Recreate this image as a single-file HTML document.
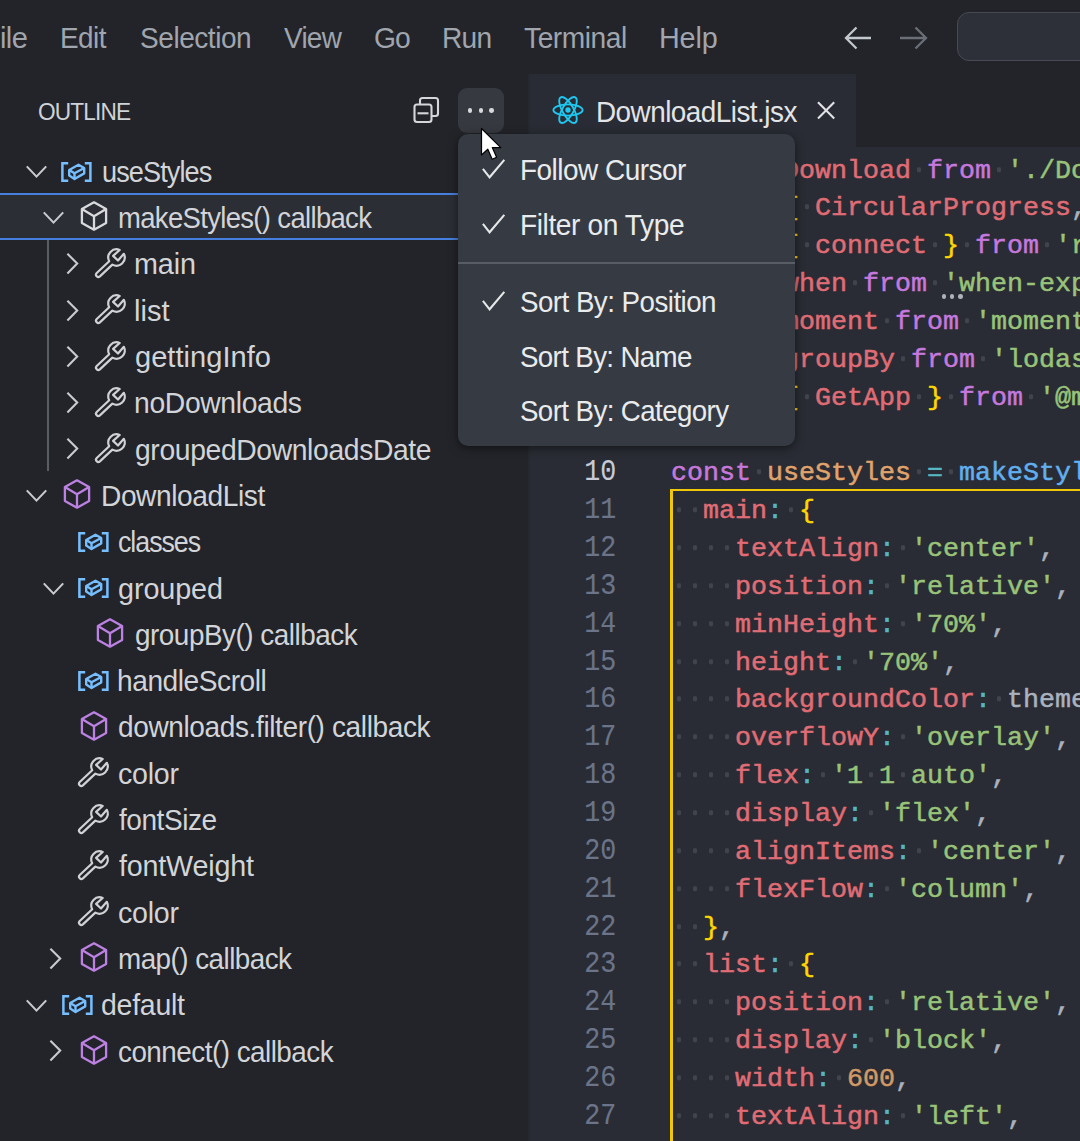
<!DOCTYPE html>
<html><head><meta charset="utf-8"><style>
html,body{margin:0;padding:0;width:1080px;height:1141px;overflow:hidden;background:#222429;}
.r{position:absolute;}
.t{position:absolute;white-space:nowrap;line-height:normal;}
i{display:inline-block;width:16.0px;height:1px;position:relative;}
i::after{content:"";position:absolute;left:5.9px;top:-9.6px;width:4.4px;height:4.4px;border-radius:1.2px;background:#3f444d;}
</style></head><body>
<div class="r" style="left:0px;top:0px;width:1080px;height:74px;background:#222429;"></div>
<div class="r" style="left:0px;top:74px;width:529px;height:1067px;background:#222429;"></div>
<div class="r" style="left:528px;top:74px;width:2px;height:1067px;background:#26292e;"></div>
<div class="r" style="left:530px;top:74px;width:550px;height:73px;background:#222429;"></div>
<div class="r" style="left:530px;top:74px;width:326px;height:73px;background:#292c34;"></div>
<div class="r" style="left:530px;top:147px;width:550px;height:994px;background:#292c34;"></div>
<div class="t" style="left:0px;top:22.17px;font-size:29px;color:#a0a5ae;font-family:'Liberation Sans', sans-serif;letter-spacing:-0.6px">ile</div>
<div class="t" style="left:59.84px;top:22.17px;font-size:29px;letter-spacing:-0.583px;color:#a0a5ae;font-family:'Liberation Sans', sans-serif;transform:scaleX(0.9617);transform-origin:0 0;">Edit</div>
<div class="t" style="left:139.54px;top:22.17px;font-size:29px;letter-spacing:-0.469px;color:#a0a5ae;font-family:'Liberation Sans', sans-serif;transform:scaleX(0.9667);transform-origin:0 0;">Selection</div>
<div class="t" style="left:283.76px;top:22.17px;font-size:29px;letter-spacing:-0.750px;color:#a0a5ae;font-family:'Liberation Sans', sans-serif;transform:scaleX(0.9623);transform-origin:0 0;">View</div>
<div class="t" style="left:374.14px;top:22.17px;font-size:29px;letter-spacing:-0.950px;color:#a0a5ae;font-family:'Liberation Sans', sans-serif;transform:scaleX(0.9743);transform-origin:0 0;">Go</div>
<div class="t" style="left:442.42px;top:22.17px;font-size:29px;letter-spacing:-0.750px;color:#a0a5ae;font-family:'Liberation Sans', sans-serif;transform:scaleX(0.9684);transform-origin:0 0;">Run</div>
<div class="t" style="left:524.21px;top:22.17px;font-size:29px;letter-spacing:-0.454px;color:#a0a5ae;font-family:'Liberation Sans', sans-serif;transform:scaleX(0.9702);transform-origin:0 0;">Terminal</div>
<div class="t" style="left:658.77px;top:22.17px;font-size:29px;letter-spacing:-0.158px;color:#a0a5ae;font-family:'Liberation Sans', sans-serif;transform:scaleX(0.9919);transform-origin:0 0;">Help</div>
<svg class="r" style="left:840px;top:20px" width="100" height="40" viewBox="0 0 100 40">
<path d="M6 18 L31 18 M16.5 7.5 L6 18 L16.5 28.5" stroke="#c3c7ce" stroke-width="2.3" fill="none"/>
<path d="M60 18 L86 18 M75.5 7.5 L86 18 L75.5 28.5" stroke="#6a6e76" stroke-width="2.3" fill="none"/>
</svg>
<div class="r" style="left:957px;top:11.5px;width:200px;height:49.3px;box-sizing:border-box;border:1.8px solid #474a52;border-radius:12px;background:#2d3038"></div>
<div class="t" style="left:37.96px;top:98.44px;font-size:24px;letter-spacing:-0.908px;color:#cfd2d6;font-family:'Liberation Sans', sans-serif;transform:scaleX(0.9440);transform-origin:0 0;">OUTLINE</div>
<svg class="r" style="left:410px;top:94px" width="32" height="32" viewBox="0 0 32 32">
<g stroke="#d4d6da" stroke-width="2.1" fill="none">
<path d="M10 10 V6.5 a2.5 2.5 0 0 1 2.5 -2.5 h13 a2.5 2.5 0 0 1 2.5 2.5 v13 a2.5 2.5 0 0 1 -2.5 2.5 h-4"/>
<rect x="4.5" y="10.5" width="17" height="17.5" rx="2.5"/>
<path d="M7.5 19.3 H18.5"/></g>
</svg>
<div class="r" style="left:458px;top:87.5px;width:46px;height:45.5px;border-radius:9px;background:#36393f"></div>
<div class="r" style="left:468.05px;top:108.35px;width:4.3px;height:4.3px;border-radius:50%;background:#d6d8dc"></div>
<div class="r" style="left:478.65000000000003px;top:108.35px;width:4.3px;height:4.3px;border-radius:50%;background:#d6d8dc"></div>
<div class="r" style="left:489.25px;top:108.35px;width:4.3px;height:4.3px;border-radius:50%;background:#d6d8dc"></div>
<div class="r" style="left:0px;top:193px;width:458px;height:47px;background:#2b2e35;box-sizing:border-box;border-top:2.2px solid #4580e0;border-bottom:2.2px solid #4580e0"></div>
<div class="r" style="left:47.2px;top:240px;width:1.6px;height:231px;background:#5a5d63;"></div>
<svg class="r" style="left:25.2px;top:164.15px" width="24" height="16" viewBox="0 0 24 16"><path d="M1.8 2.4 L11.5 12.6 L21.2 2.4" stroke="#c9cbd0" stroke-width="2.1" fill="none"/></svg>
<svg class="r" style="left:61px;top:160.65px" width="32" height="22" viewBox="0 0 32 22">
<g stroke="#75beff" fill="none" stroke-width="2.5">
<path d="M7.2 2.3 H1.4 V19.7 H7.2"/>
<path d="M23.8 2.3 H29.4 V19.7 H23.8"/>
</g>
<g stroke="#75beff" fill="none" stroke-width="2.4" stroke-linejoin="round">
<path d="M8.2 9 L17.5 3.8 L23.2 7 V12.4 L13.5 18 L8.2 14.6 Z"/>
<path d="M8.2 9 L13.5 12.2 L23.2 7 M13.5 12.2 V18"/>
</g>
</svg>
<div class="t" style="left:101.66px;top:155.81px;font-size:29px;letter-spacing:-0.956px;color:#d2d4d8;font-family:'Liberation Sans', sans-serif;transform:scaleX(0.9345);transform-origin:0 0;">useStyles</div>
<svg class="r" style="left:41.9px;top:210.45000000000002px" width="24" height="16" viewBox="0 0 24 16"><path d="M1.8 2.4 L11.5 12.6 L21.2 2.4" stroke="#c9cbd0" stroke-width="2.1" fill="none"/></svg>
<svg class="r" style="left:79.6px;top:200.35px" width="30" height="32" viewBox="0 0 30 32">
<g stroke="#d8dadd" stroke-width="2.3" fill="none" stroke-linejoin="round">
<path d="M14 2.3 L26.1 9.1 V22.9 L14 29.7 L1.9 22.9 V9.1 Z"/>
<path d="M1.9 9.1 L14 16.3 L26.1 9.1 M14 16.3 V29.7"/>
</g></svg>
<div class="t" style="left:118.11px;top:202.12px;font-size:29px;letter-spacing:-0.700px;color:#d2d4d8;font-family:'Liberation Sans', sans-serif;transform:scaleX(0.9474);transform-origin:0 0;">makeStyles() callback</div>
<svg class="r" style="left:64.8px;top:252.25px" width="16" height="24" viewBox="0 0 16 24"><path d="M2.4 1.8 L12.2 11.6 L2.4 21.4" stroke="#c9cbd0" stroke-width="2.1" fill="none"/></svg>
<svg class="r" style="left:92.0px;top:244.89999999999998px" width="36" height="36" viewBox="0 0 36 36">
<path d="M20.36 19.58 L7.88 31.37 A2.3 2.3 0 0 1 4.72 28.03 L17.2 16.24 A8.2 8.2 0 0 1 27.7 4.95 L21.1 10.9 L26 15.5 L31.83 8.83 A8.2 8.2 0 0 1 20.36 19.58 Z" stroke="#cfd1d4" stroke-width="2.2" fill="none" stroke-linejoin="round"/>
</svg>
<div class="t" style="left:134.02px;top:248.41px;font-size:29px;letter-spacing:-0.117px;color:#d2d4d8;font-family:'Liberation Sans', sans-serif;transform:scaleX(0.9923);transform-origin:0 0;">main</div>
<svg class="r" style="left:64.8px;top:298.54999999999995px" width="16" height="24" viewBox="0 0 16 24"><path d="M2.4 1.8 L12.2 11.6 L2.4 21.4" stroke="#c9cbd0" stroke-width="2.1" fill="none"/></svg>
<svg class="r" style="left:92.0px;top:291.19999999999993px" width="36" height="36" viewBox="0 0 36 36">
<path d="M20.36 19.58 L7.88 31.37 A2.3 2.3 0 0 1 4.72 28.03 L17.2 16.24 A8.2 8.2 0 0 1 27.7 4.95 L21.1 10.9 L26 15.5 L31.83 8.83 A8.2 8.2 0 0 1 20.36 19.58 Z" stroke="#cfd1d4" stroke-width="2.2" fill="none" stroke-linejoin="round"/>
</svg>
<div class="t" style="left:134.00px;top:294.71px;font-size:29px;letter-spacing:0.008px;color:#d2d4d8;font-family:'Liberation Sans', sans-serif;transform:scaleX(1.0015);transform-origin:0 0;">list</div>
<svg class="r" style="left:64.8px;top:344.84999999999997px" width="16" height="24" viewBox="0 0 16 24"><path d="M2.4 1.8 L12.2 11.6 L2.4 21.4" stroke="#c9cbd0" stroke-width="2.1" fill="none"/></svg>
<svg class="r" style="left:92.0px;top:337.49999999999994px" width="36" height="36" viewBox="0 0 36 36">
<path d="M20.36 19.58 L7.88 31.37 A2.3 2.3 0 0 1 4.72 28.03 L17.2 16.24 A8.2 8.2 0 0 1 27.7 4.95 L21.1 10.9 L26 15.5 L31.83 8.83 A8.2 8.2 0 0 1 20.36 19.58 Z" stroke="#cfd1d4" stroke-width="2.2" fill="none" stroke-linejoin="round"/>
</svg>
<div class="t" style="left:134.75px;top:341.01px;font-size:29px;letter-spacing:0.015px;color:#d2d4d8;font-family:'Liberation Sans', sans-serif;transform:scaleX(1.0023);transform-origin:0 0;">gettingInfo</div>
<svg class="r" style="left:64.8px;top:391.15px" width="16" height="24" viewBox="0 0 16 24"><path d="M2.4 1.8 L12.2 11.6 L2.4 21.4" stroke="#c9cbd0" stroke-width="2.1" fill="none"/></svg>
<svg class="r" style="left:92.0px;top:383.79999999999995px" width="36" height="36" viewBox="0 0 36 36">
<path d="M20.36 19.58 L7.88 31.37 A2.3 2.3 0 0 1 4.72 28.03 L17.2 16.24 A8.2 8.2 0 0 1 27.7 4.95 L21.1 10.9 L26 15.5 L31.83 8.83 A8.2 8.2 0 0 1 20.36 19.58 Z" stroke="#cfd1d4" stroke-width="2.2" fill="none" stroke-linejoin="round"/>
</svg>
<div class="t" style="left:134.04px;top:387.31px;font-size:29px;letter-spacing:-0.388px;color:#d2d4d8;font-family:'Liberation Sans', sans-serif;transform:scaleX(0.9778);transform-origin:0 0;">noDownloads</div>
<svg class="r" style="left:64.8px;top:437.44999999999993px" width="16" height="24" viewBox="0 0 16 24"><path d="M2.4 1.8 L12.2 11.6 L2.4 21.4" stroke="#c9cbd0" stroke-width="2.1" fill="none"/></svg>
<svg class="r" style="left:92.0px;top:430.0999999999999px" width="36" height="36" viewBox="0 0 36 36">
<path d="M20.36 19.58 L7.88 31.37 A2.3 2.3 0 0 1 4.72 28.03 L17.2 16.24 A8.2 8.2 0 0 1 27.7 4.95 L21.1 10.9 L26 15.5 L31.83 8.83 A8.2 8.2 0 0 1 20.36 19.58 Z" stroke="#cfd1d4" stroke-width="2.2" fill="none" stroke-linejoin="round"/>
</svg>
<div class="t" style="left:134.78px;top:433.61px;font-size:29px;letter-spacing:-0.382px;color:#d2d4d8;font-family:'Liberation Sans', sans-serif;transform:scaleX(0.9759);transform-origin:0 0;">groupedDownloadsDate</div>
<svg class="r" style="left:25.2px;top:488.24999999999994px" width="24" height="16" viewBox="0 0 24 16"><path d="M1.8 2.4 L11.5 12.6 L21.2 2.4" stroke="#c9cbd0" stroke-width="2.1" fill="none"/></svg>
<svg class="r" style="left:62.6px;top:478.1499999999999px" width="30" height="32" viewBox="0 0 30 32">
<g stroke="#bd80e3" stroke-width="2.3" fill="none" stroke-linejoin="round">
<path d="M14 2.3 L26.1 9.1 V22.9 L14 29.7 L1.9 22.9 V9.1 Z"/>
<path d="M1.9 9.1 L14 16.3 L26.1 9.1 M14 16.3 V29.7"/>
</g></svg>
<div class="t" style="left:100.52px;top:479.91px;font-size:29px;letter-spacing:-0.448px;color:#d2d4d8;font-family:'Liberation Sans', sans-serif;transform:scaleX(0.9709);transform-origin:0 0;">DownloadList</div>
<svg class="r" style="left:77.7px;top:531.0499999999998px" width="32" height="22" viewBox="0 0 32 22">
<g stroke="#75beff" fill="none" stroke-width="2.5">
<path d="M7.2 2.3 H1.4 V19.7 H7.2"/>
<path d="M23.8 2.3 H29.4 V19.7 H23.8"/>
</g>
<g stroke="#75beff" fill="none" stroke-width="2.4" stroke-linejoin="round">
<path d="M8.2 9 L17.5 3.8 L23.2 7 V12.4 L13.5 18 L8.2 14.6 Z"/>
<path d="M8.2 9 L13.5 12.2 L23.2 7 M13.5 12.2 V18"/>
</g>
</svg>
<div class="t" style="left:118.14px;top:526.21px;font-size:29px;letter-spacing:-1.133px;color:#d2d4d8;font-family:'Liberation Sans', sans-serif;transform:scaleX(0.9246);transform-origin:0 0;">classes</div>
<svg class="r" style="left:41.9px;top:580.8499999999999px" width="24" height="16" viewBox="0 0 24 16"><path d="M1.8 2.4 L11.5 12.6 L21.2 2.4" stroke="#c9cbd0" stroke-width="2.1" fill="none"/></svg>
<svg class="r" style="left:77.7px;top:577.3499999999999px" width="32" height="22" viewBox="0 0 32 22">
<g stroke="#75beff" fill="none" stroke-width="2.5">
<path d="M7.2 2.3 H1.4 V19.7 H7.2"/>
<path d="M23.8 2.3 H29.4 V19.7 H23.8"/>
</g>
<g stroke="#75beff" fill="none" stroke-width="2.4" stroke-linejoin="round">
<path d="M8.2 9 L17.5 3.8 L23.2 7 V12.4 L13.5 18 L8.2 14.6 Z"/>
<path d="M8.2 9 L13.5 12.2 L23.2 7 M13.5 12.2 V18"/>
</g>
</svg>
<div class="t" style="left:118.06px;top:572.51px;font-size:29px;letter-spacing:-0.104px;color:#d2d4d8;font-family:'Liberation Sans', sans-serif;transform:scaleX(0.9927);transform-origin:0 0;">grouped</div>
<svg class="r" style="left:96.4px;top:617.0500000000001px" width="30" height="32" viewBox="0 0 30 32">
<g stroke="#bd80e3" stroke-width="2.3" fill="none" stroke-linejoin="round">
<path d="M14 2.3 L26.1 9.1 V22.9 L14 29.7 L1.9 22.9 V9.1 Z"/>
<path d="M1.9 9.1 L14 16.3 L26.1 9.1 M14 16.3 V29.7"/>
</g></svg>
<div class="t" style="left:135.00px;top:618.82px;font-size:29px;letter-spacing:-0.512px;color:#d2d4d8;font-family:'Liberation Sans', sans-serif;transform:scaleX(0.9624);transform-origin:0 0;">groupBy() callback</div>
<svg class="r" style="left:77.7px;top:669.9499999999999px" width="32" height="22" viewBox="0 0 32 22">
<g stroke="#75beff" fill="none" stroke-width="2.5">
<path d="M7.2 2.3 H1.4 V19.7 H7.2"/>
<path d="M23.8 2.3 H29.4 V19.7 H23.8"/>
</g>
<g stroke="#75beff" fill="none" stroke-width="2.4" stroke-linejoin="round">
<path d="M8.2 9 L17.5 3.8 L23.2 7 V12.4 L13.5 18 L8.2 14.6 Z"/>
<path d="M8.2 9 L13.5 12.2 L23.2 7 M13.5 12.2 V18"/>
</g>
</svg>
<div class="t" style="left:117.36px;top:665.12px;font-size:29px;letter-spacing:-0.443px;color:#d2d4d8;font-family:'Liberation Sans', sans-serif;transform:scaleX(0.9685);transform-origin:0 0;">handleScroll</div>
<svg class="r" style="left:79.6px;top:709.65px" width="30" height="32" viewBox="0 0 30 32">
<g stroke="#bd80e3" stroke-width="2.3" fill="none" stroke-linejoin="round">
<path d="M14 2.3 L26.1 9.1 V22.9 L14 29.7 L1.9 22.9 V9.1 Z"/>
<path d="M1.9 9.1 L14 16.3 L26.1 9.1 M14 16.3 V29.7"/>
</g></svg>
<div class="t" style="left:118.09px;top:711.41px;font-size:29px;letter-spacing:-0.401px;color:#d2d4d8;font-family:'Liberation Sans', sans-serif;transform:scaleX(0.9671);transform-origin:0 0;">downloads.filter() callback</div>
<svg class="r" style="left:75.0px;top:754.1999999999999px" width="36" height="36" viewBox="0 0 36 36">
<path d="M20.36 19.58 L7.88 31.37 A2.3 2.3 0 0 1 4.72 28.03 L17.2 16.24 A8.2 8.2 0 0 1 27.7 4.95 L21.1 10.9 L26 15.5 L31.83 8.83 A8.2 8.2 0 0 1 20.36 19.58 Z" stroke="#cfd1d4" stroke-width="2.2" fill="none" stroke-linejoin="round"/>
</svg>
<div class="t" style="left:118.37px;top:757.71px;font-size:29px;letter-spacing:-0.231px;color:#d2d4d8;font-family:'Liberation Sans', sans-serif;transform:scaleX(0.9859);transform-origin:0 0;">color</div>
<svg class="r" style="left:75.0px;top:800.4999999999999px" width="36" height="36" viewBox="0 0 36 36">
<path d="M20.36 19.58 L7.88 31.37 A2.3 2.3 0 0 1 4.72 28.03 L17.2 16.24 A8.2 8.2 0 0 1 27.7 4.95 L21.1 10.9 L26 15.5 L31.83 8.83 A8.2 8.2 0 0 1 20.36 19.58 Z" stroke="#cfd1d4" stroke-width="2.2" fill="none" stroke-linejoin="round"/>
</svg>
<div class="t" style="left:119.12px;top:804.01px;font-size:29px;letter-spacing:-0.471px;color:#d2d4d8;font-family:'Liberation Sans', sans-serif;transform:scaleX(0.9664);transform-origin:0 0;">fontSize</div>
<svg class="r" style="left:75.0px;top:846.8000000000001px" width="36" height="36" viewBox="0 0 36 36">
<path d="M20.36 19.58 L7.88 31.37 A2.3 2.3 0 0 1 4.72 28.03 L17.2 16.24 A8.2 8.2 0 0 1 27.7 4.95 L21.1 10.9 L26 15.5 L31.83 8.83 A8.2 8.2 0 0 1 20.36 19.58 Z" stroke="#cfd1d4" stroke-width="2.2" fill="none" stroke-linejoin="round"/>
</svg>
<div class="t" style="left:119.11px;top:850.32px;font-size:29px;letter-spacing:-0.172px;color:#d2d4d8;font-family:'Liberation Sans', sans-serif;transform:scaleX(0.9882);transform-origin:0 0;">fontWeight</div>
<svg class="r" style="left:75.0px;top:893.1px" width="36" height="36" viewBox="0 0 36 36">
<path d="M20.36 19.58 L7.88 31.37 A2.3 2.3 0 0 1 4.72 28.03 L17.2 16.24 A8.2 8.2 0 0 1 27.7 4.95 L21.1 10.9 L26 15.5 L31.83 8.83 A8.2 8.2 0 0 1 20.36 19.58 Z" stroke="#cfd1d4" stroke-width="2.2" fill="none" stroke-linejoin="round"/>
</svg>
<div class="t" style="left:118.37px;top:896.62px;font-size:29px;letter-spacing:-0.231px;color:#d2d4d8;font-family:'Liberation Sans', sans-serif;transform:scaleX(0.9859);transform-origin:0 0;">color</div>
<svg class="r" style="left:47.9px;top:946.7499999999999px" width="16" height="24" viewBox="0 0 16 24"><path d="M2.4 1.8 L12.2 11.6 L2.4 21.4" stroke="#c9cbd0" stroke-width="2.1" fill="none"/></svg>
<svg class="r" style="left:79.6px;top:941.15px" width="30" height="32" viewBox="0 0 30 32">
<g stroke="#bd80e3" stroke-width="2.3" fill="none" stroke-linejoin="round">
<path d="M14 2.3 L26.1 9.1 V22.9 L14 29.7 L1.9 22.9 V9.1 Z"/>
<path d="M1.9 9.1 L14 16.3 L26.1 9.1 M14 16.3 V29.7"/>
</g></svg>
<div class="t" style="left:117.68px;top:942.91px;font-size:29px;letter-spacing:-0.558px;color:#d2d4d8;font-family:'Liberation Sans', sans-serif;transform:scaleX(0.9596);transform-origin:0 0;">map() callback</div>
<svg class="r" style="left:25.2px;top:997.5499999999998px" width="24" height="16" viewBox="0 0 24 16"><path d="M1.8 2.4 L11.5 12.6 L21.2 2.4" stroke="#c9cbd0" stroke-width="2.1" fill="none"/></svg>
<svg class="r" style="left:61.5px;top:994.0499999999998px" width="32" height="22" viewBox="0 0 32 22">
<g stroke="#75beff" fill="none" stroke-width="2.5">
<path d="M7.2 2.3 H1.4 V19.7 H7.2"/>
<path d="M23.8 2.3 H29.4 V19.7 H23.8"/>
</g>
<g stroke="#75beff" fill="none" stroke-width="2.4" stroke-linejoin="round">
<path d="M8.2 9 L17.5 3.8 L23.2 7 V12.4 L13.5 18 L8.2 14.6 Z"/>
<path d="M8.2 9 L13.5 12.2 L23.2 7 M13.5 12.2 V18"/>
</g>
</svg>
<div class="t" style="left:101.47px;top:989.21px;font-size:29px;letter-spacing:-0.254px;color:#d2d4d8;font-family:'Liberation Sans', sans-serif;transform:scaleX(0.9816);transform-origin:0 0;">default</div>
<svg class="r" style="left:47.9px;top:1039.35px" width="16" height="24" viewBox="0 0 16 24"><path d="M2.4 1.8 L12.2 11.6 L2.4 21.4" stroke="#c9cbd0" stroke-width="2.1" fill="none"/></svg>
<svg class="r" style="left:79.6px;top:1033.75px" width="30" height="32" viewBox="0 0 30 32">
<g stroke="#bd80e3" stroke-width="2.3" fill="none" stroke-linejoin="round">
<path d="M14 2.3 L26.1 9.1 V22.9 L14 29.7 L1.9 22.9 V9.1 Z"/>
<path d="M1.9 9.1 L14 16.3 L26.1 9.1 M14 16.3 V29.7"/>
</g></svg>
<div class="t" style="left:118.40px;top:1035.51px;font-size:29px;letter-spacing:-0.535px;color:#d2d4d8;font-family:'Liberation Sans', sans-serif;transform:scaleX(0.9599);transform-origin:0 0;">connect() callback</div>
<svg class="r" style="left:551px;top:93px" width="34" height="34" viewBox="0 0 34 34">
<g stroke="#1ec8f0" stroke-width="1.9" fill="none">
<ellipse cx="17" cy="17" rx="14.6" ry="5.6"/>
<ellipse cx="17" cy="17" rx="14.6" ry="5.6" transform="rotate(60 17 17)"/>
<ellipse cx="17" cy="17" rx="14.6" ry="5.6" transform="rotate(120 17 17)"/>
</g><circle cx="17" cy="17" r="2.7" fill="#1ec8f0"/></svg>
<div class="t" style="left:595.94px;top:96.17px;font-size:29px;letter-spacing:-0.537px;color:#e2e4e8;font-family:'Liberation Sans', sans-serif;transform:scaleX(0.9609);transform-origin:0 0;">DownloadList.jsx</div>
<svg class="r" style="left:812px;top:96px" width="30" height="30" viewBox="0 0 30 30"><path d="M6 6.2 L22.2 22.4 M22.2 6.2 L6 22.4" stroke="#e0e2e6" stroke-width="2.1"/></svg>
<div class="t" style="left:671px;top:155.56px;font-size:26.67px;color:#abb2bf;font-family:'Liberation Mono', monospace;white-space:pre;-webkit-text-stroke:0.5px currentColor;transform:scaleY(0.97);transform-origin:0 22.1px"><span style="color:#c678dd">import</span><i></i><span style="color:#e06c75">Download</span><i></i><span style="color:#c678dd">from</span><i></i><span style="color:#98c379">'./Download'</span></div>
<div class="t" style="left:671px;top:193.41px;font-size:26.67px;color:#abb2bf;font-family:'Liberation Mono', monospace;white-space:pre;-webkit-text-stroke:0.5px currentColor;transform:scaleY(0.97);transform-origin:0 22.1px"><span style="color:#c678dd">import</span><i></i><span style="color:#ffd700">{</span><i></i><span style="color:#e06c75">CircularProgress</span><span style="color:#abb2bf">,</span><i></i><span style="color:#e06c75">Typography</span></div>
<div class="t" style="left:671px;top:231.26px;font-size:26.67px;color:#abb2bf;font-family:'Liberation Mono', monospace;white-space:pre;-webkit-text-stroke:0.5px currentColor;transform:scaleY(0.97);transform-origin:0 22.1px"><span style="color:#c678dd">import</span><i></i><span style="color:#ffd700">{</span><i></i><span style="color:#e06c75">connect</span><i></i><span style="color:#ffd700">}</span><i></i><span style="color:#c678dd">from</span><i></i><span style="color:#98c379">'react-redux'</span></div>
<div class="t" style="left:671px;top:269.11px;font-size:26.67px;color:#abb2bf;font-family:'Liberation Mono', monospace;white-space:pre;-webkit-text-stroke:0.5px currentColor;transform:scaleY(0.97);transform-origin:0 22.1px"><span style="color:#c678dd">import</span><i></i><span style="color:#e06c75">when</span><i></i><span style="color:#c678dd">from</span><i></i><span style="color:#98c379">'when-expression'</span></div>
<div class="t" style="left:671px;top:306.96px;font-size:26.67px;color:#abb2bf;font-family:'Liberation Mono', monospace;white-space:pre;-webkit-text-stroke:0.5px currentColor;transform:scaleY(0.97);transform-origin:0 22.1px"><span style="color:#c678dd">import</span><i></i><span style="color:#e06c75">moment</span><i></i><span style="color:#c678dd">from</span><i></i><span style="color:#98c379">'moment'</span></div>
<div class="t" style="left:671px;top:344.81px;font-size:26.67px;color:#abb2bf;font-family:'Liberation Mono', monospace;white-space:pre;-webkit-text-stroke:0.5px currentColor;transform:scaleY(0.97);transform-origin:0 22.1px"><span style="color:#c678dd">import</span><i></i><span style="color:#e06c75">groupBy</span><i></i><span style="color:#c678dd">from</span><i></i><span style="color:#98c379">'lodash/groupBy'</span></div>
<div class="t" style="left:671px;top:382.66px;font-size:26.67px;color:#abb2bf;font-family:'Liberation Mono', monospace;white-space:pre;-webkit-text-stroke:0.5px currentColor;transform:scaleY(0.97);transform-origin:0 22.1px"><span style="color:#c678dd">import</span><i></i><span style="color:#ffd700">{</span><i></i><span style="color:#e06c75">GetApp</span><i></i><span style="color:#ffd700">}</span><i></i><span style="color:#c678dd">from</span><i></i><span style="color:#98c379">'@material-ui/icons'</span></div>
<div class="t" style="left:671px;top:458.36px;font-size:26.67px;color:#abb2bf;font-family:'Liberation Mono', monospace;white-space:pre;-webkit-text-stroke:0.5px currentColor;transform:scaleY(0.97);transform-origin:0 22.1px"><span style="color:#c678dd">const</span><i></i><span style="color:#e0a36c">useStyles</span><i></i><span style="color:#56b6c2">=</span><i></i><span style="color:#61afef">makeStyles</span><span style="color:#abb2bf">(</span></div>
<div class="t" style="left:671px;top:496.21px;font-size:26.67px;color:#abb2bf;font-family:'Liberation Mono', monospace;white-space:pre;-webkit-text-stroke:0.5px currentColor;transform:scaleY(0.97);transform-origin:0 22.1px"><i></i><i></i><span style="color:#e06c75">main</span><span style="color:#56b6c2">:</span><i></i><span style="color:#ffd700">{</span></div>
<div class="t" style="left:671px;top:534.06px;font-size:26.67px;color:#abb2bf;font-family:'Liberation Mono', monospace;white-space:pre;-webkit-text-stroke:0.5px currentColor;transform:scaleY(0.97);transform-origin:0 22.1px"><i></i><i></i><i></i><i></i><span style="color:#e06c75">textAlign</span><span style="color:#56b6c2">:</span><i></i><span style="color:#98c379">'center'</span><span style="color:#abb2bf">,</span></div>
<div class="t" style="left:671px;top:571.91px;font-size:26.67px;color:#abb2bf;font-family:'Liberation Mono', monospace;white-space:pre;-webkit-text-stroke:0.5px currentColor;transform:scaleY(0.97);transform-origin:0 22.1px"><i></i><i></i><i></i><i></i><span style="color:#e06c75">position</span><span style="color:#56b6c2">:</span><i></i><span style="color:#98c379">'relative'</span><span style="color:#abb2bf">,</span></div>
<div class="t" style="left:671px;top:609.76px;font-size:26.67px;color:#abb2bf;font-family:'Liberation Mono', monospace;white-space:pre;-webkit-text-stroke:0.5px currentColor;transform:scaleY(0.97);transform-origin:0 22.1px"><i></i><i></i><i></i><i></i><span style="color:#e06c75">minHeight</span><span style="color:#56b6c2">:</span><i></i><span style="color:#98c379">'70%'</span><span style="color:#abb2bf">,</span></div>
<div class="t" style="left:671px;top:647.61px;font-size:26.67px;color:#abb2bf;font-family:'Liberation Mono', monospace;white-space:pre;-webkit-text-stroke:0.5px currentColor;transform:scaleY(0.97);transform-origin:0 22.1px"><i></i><i></i><i></i><i></i><span style="color:#e06c75">height</span><span style="color:#56b6c2">:</span><i></i><span style="color:#98c379">'70%'</span><span style="color:#abb2bf">,</span></div>
<div class="t" style="left:671px;top:685.46px;font-size:26.67px;color:#abb2bf;font-family:'Liberation Mono', monospace;white-space:pre;-webkit-text-stroke:0.5px currentColor;transform:scaleY(0.97);transform-origin:0 22.1px"><i></i><i></i><i></i><i></i><span style="color:#e06c75">backgroundColor</span><span style="color:#56b6c2">:</span><i></i><span style="color:#abb2bf">theme</span></div>
<div class="t" style="left:671px;top:723.31px;font-size:26.67px;color:#abb2bf;font-family:'Liberation Mono', monospace;white-space:pre;-webkit-text-stroke:0.5px currentColor;transform:scaleY(0.97);transform-origin:0 22.1px"><i></i><i></i><i></i><i></i><span style="color:#e06c75">overflowY</span><span style="color:#56b6c2">:</span><i></i><span style="color:#98c379">'overlay'</span><span style="color:#abb2bf">,</span></div>
<div class="t" style="left:671px;top:761.16px;font-size:26.67px;color:#abb2bf;font-family:'Liberation Mono', monospace;white-space:pre;-webkit-text-stroke:0.5px currentColor;transform:scaleY(0.97);transform-origin:0 22.1px"><i></i><i></i><i></i><i></i><span style="color:#e06c75">flex</span><span style="color:#56b6c2">:</span><i></i><span style="color:#98c379">'1</span><i></i><span style="color:#98c379">1</span><i></i><span style="color:#98c379">auto'</span><span style="color:#abb2bf">,</span></div>
<div class="t" style="left:671px;top:799.01px;font-size:26.67px;color:#abb2bf;font-family:'Liberation Mono', monospace;white-space:pre;-webkit-text-stroke:0.5px currentColor;transform:scaleY(0.97);transform-origin:0 22.1px"><i></i><i></i><i></i><i></i><span style="color:#e06c75">display</span><span style="color:#56b6c2">:</span><i></i><span style="color:#98c379">'flex'</span><span style="color:#abb2bf">,</span></div>
<div class="t" style="left:671px;top:836.86px;font-size:26.67px;color:#abb2bf;font-family:'Liberation Mono', monospace;white-space:pre;-webkit-text-stroke:0.5px currentColor;transform:scaleY(0.97);transform-origin:0 22.1px"><i></i><i></i><i></i><i></i><span style="color:#e06c75">alignItems</span><span style="color:#56b6c2">:</span><i></i><span style="color:#98c379">'center'</span><span style="color:#abb2bf">,</span></div>
<div class="t" style="left:671px;top:874.71px;font-size:26.67px;color:#abb2bf;font-family:'Liberation Mono', monospace;white-space:pre;-webkit-text-stroke:0.5px currentColor;transform:scaleY(0.97);transform-origin:0 22.1px"><i></i><i></i><i></i><i></i><span style="color:#e06c75">flexFlow</span><span style="color:#56b6c2">:</span><i></i><span style="color:#98c379">'column'</span><span style="color:#abb2bf">,</span></div>
<div class="t" style="left:671px;top:912.56px;font-size:26.67px;color:#abb2bf;font-family:'Liberation Mono', monospace;white-space:pre;-webkit-text-stroke:0.5px currentColor;transform:scaleY(0.97);transform-origin:0 22.1px"><i></i><i></i><span style="color:#ffd700">}</span><span style="color:#abb2bf">,</span></div>
<div class="t" style="left:671px;top:950.41px;font-size:26.67px;color:#abb2bf;font-family:'Liberation Mono', monospace;white-space:pre;-webkit-text-stroke:0.5px currentColor;transform:scaleY(0.97);transform-origin:0 22.1px"><i></i><i></i><span style="color:#e06c75">list</span><span style="color:#56b6c2">:</span><i></i><span style="color:#ffd700">{</span></div>
<div class="t" style="left:671px;top:988.26px;font-size:26.67px;color:#abb2bf;font-family:'Liberation Mono', monospace;white-space:pre;-webkit-text-stroke:0.5px currentColor;transform:scaleY(0.97);transform-origin:0 22.1px"><i></i><i></i><i></i><i></i><span style="color:#e06c75">position</span><span style="color:#56b6c2">:</span><i></i><span style="color:#98c379">'relative'</span><span style="color:#abb2bf">,</span></div>
<div class="t" style="left:671px;top:1026.11px;font-size:26.67px;color:#abb2bf;font-family:'Liberation Mono', monospace;white-space:pre;-webkit-text-stroke:0.5px currentColor;transform:scaleY(0.97);transform-origin:0 22.1px"><i></i><i></i><i></i><i></i><span style="color:#e06c75">display</span><span style="color:#56b6c2">:</span><i></i><span style="color:#98c379">'block'</span><span style="color:#abb2bf">,</span></div>
<div class="t" style="left:671px;top:1063.96px;font-size:26.67px;color:#abb2bf;font-family:'Liberation Mono', monospace;white-space:pre;-webkit-text-stroke:0.5px currentColor;transform:scaleY(0.97);transform-origin:0 22.1px"><i></i><i></i><i></i><i></i><span style="color:#e06c75">width</span><span style="color:#56b6c2">:</span><i></i><span style="color:#d19a66">600</span><span style="color:#abb2bf">,</span></div>
<div class="t" style="left:671px;top:1101.81px;font-size:26.67px;color:#abb2bf;font-family:'Liberation Mono', monospace;white-space:pre;-webkit-text-stroke:0.5px currentColor;transform:scaleY(0.97);transform-origin:0 22.1px"><i></i><i></i><i></i><i></i><span style="color:#e06c75">textAlign</span><span style="color:#56b6c2">:</span><i></i><span style="color:#98c379">'left'</span><span style="color:#abb2bf">,</span></div>
<div class="t" style="left:584.2px;top:458.36px;font-size:26.67px;color:#c8cbd6;font-family:'Liberation Mono', monospace;transform:scaleY(1.1);transform-origin:0 22.1px;-webkit-text-stroke:0.1px currentColor">10</div>
<div class="t" style="left:584.2px;top:496.21px;font-size:26.67px;color:#6b7488;font-family:'Liberation Mono', monospace;transform:scaleY(1.1);transform-origin:0 22.1px;-webkit-text-stroke:0.1px currentColor">11</div>
<div class="t" style="left:584.2px;top:534.06px;font-size:26.67px;color:#6b7488;font-family:'Liberation Mono', monospace;transform:scaleY(1.1);transform-origin:0 22.1px;-webkit-text-stroke:0.1px currentColor">12</div>
<div class="t" style="left:584.2px;top:571.91px;font-size:26.67px;color:#6b7488;font-family:'Liberation Mono', monospace;transform:scaleY(1.1);transform-origin:0 22.1px;-webkit-text-stroke:0.1px currentColor">13</div>
<div class="t" style="left:584.2px;top:609.76px;font-size:26.67px;color:#6b7488;font-family:'Liberation Mono', monospace;transform:scaleY(1.1);transform-origin:0 22.1px;-webkit-text-stroke:0.1px currentColor">14</div>
<div class="t" style="left:584.2px;top:647.61px;font-size:26.67px;color:#6b7488;font-family:'Liberation Mono', monospace;transform:scaleY(1.1);transform-origin:0 22.1px;-webkit-text-stroke:0.1px currentColor">15</div>
<div class="t" style="left:584.2px;top:685.46px;font-size:26.67px;color:#6b7488;font-family:'Liberation Mono', monospace;transform:scaleY(1.1);transform-origin:0 22.1px;-webkit-text-stroke:0.1px currentColor">16</div>
<div class="t" style="left:584.2px;top:723.31px;font-size:26.67px;color:#6b7488;font-family:'Liberation Mono', monospace;transform:scaleY(1.1);transform-origin:0 22.1px;-webkit-text-stroke:0.1px currentColor">17</div>
<div class="t" style="left:584.2px;top:761.16px;font-size:26.67px;color:#6b7488;font-family:'Liberation Mono', monospace;transform:scaleY(1.1);transform-origin:0 22.1px;-webkit-text-stroke:0.1px currentColor">18</div>
<div class="t" style="left:584.2px;top:799.01px;font-size:26.67px;color:#6b7488;font-family:'Liberation Mono', monospace;transform:scaleY(1.1);transform-origin:0 22.1px;-webkit-text-stroke:0.1px currentColor">19</div>
<div class="t" style="left:584.2px;top:836.86px;font-size:26.67px;color:#6b7488;font-family:'Liberation Mono', monospace;transform:scaleY(1.1);transform-origin:0 22.1px;-webkit-text-stroke:0.1px currentColor">20</div>
<div class="t" style="left:584.2px;top:874.71px;font-size:26.67px;color:#6b7488;font-family:'Liberation Mono', monospace;transform:scaleY(1.1);transform-origin:0 22.1px;-webkit-text-stroke:0.1px currentColor">21</div>
<div class="t" style="left:584.2px;top:912.56px;font-size:26.67px;color:#6b7488;font-family:'Liberation Mono', monospace;transform:scaleY(1.1);transform-origin:0 22.1px;-webkit-text-stroke:0.1px currentColor">22</div>
<div class="t" style="left:584.2px;top:950.41px;font-size:26.67px;color:#6b7488;font-family:'Liberation Mono', monospace;transform:scaleY(1.1);transform-origin:0 22.1px;-webkit-text-stroke:0.1px currentColor">23</div>
<div class="t" style="left:584.2px;top:988.26px;font-size:26.67px;color:#6b7488;font-family:'Liberation Mono', monospace;transform:scaleY(1.1);transform-origin:0 22.1px;-webkit-text-stroke:0.1px currentColor">24</div>
<div class="t" style="left:584.2px;top:1026.11px;font-size:26.67px;color:#6b7488;font-family:'Liberation Mono', monospace;transform:scaleY(1.1);transform-origin:0 22.1px;-webkit-text-stroke:0.1px currentColor">25</div>
<div class="t" style="left:584.2px;top:1063.96px;font-size:26.67px;color:#6b7488;font-family:'Liberation Mono', monospace;transform:scaleY(1.1);transform-origin:0 22.1px;-webkit-text-stroke:0.1px currentColor">26</div>
<div class="t" style="left:584.2px;top:1101.81px;font-size:26.67px;color:#6b7488;font-family:'Liberation Mono', monospace;transform:scaleY(1.1);transform-origin:0 22.1px;-webkit-text-stroke:0.1px currentColor">27</div>
<div class="r" style="left:669.8px;top:488.5px;width:410.2px;height:2.8px;background:#f0c808;"></div>
<div class="r" style="left:669.8px;top:488.5px;width:2.8px;height:653px;background:#f0c808;"></div>
<div class="r" style="left:941.7px;top:294.4px;width:4.6px;height:4.6px;background:#aeb2b9;border-radius:50%"></div>
<div class="r" style="left:949.8000000000001px;top:294.4px;width:4.6px;height:4.6px;background:#aeb2b9;border-radius:50%"></div>
<div class="r" style="left:958.0px;top:294.4px;width:4.6px;height:4.6px;background:#aeb2b9;border-radius:50%"></div>
<div class="r" style="left:458px;top:133.6px;width:336.5px;height:312.2px;border-radius:10px;background:#363b43;box-shadow:0 2px 10px rgba(0,0,0,0.5)"></div>
<div class="r" style="left:458px;top:262px;width:336.5px;height:1.6px;background:#585c64;"></div>
<svg class="r" style="left:481.0px;top:158.2px" width="27" height="22" viewBox="0 0 27 22"><path d="M1.9 10.9 L8.6 19.3 L23.3 1.9" stroke="#e6e7e9" stroke-width="2.1" fill="none"/></svg>
<div class="t" style="left:519.63px;top:154.47px;font-size:29px;letter-spacing:-0.519px;color:#eaebed;font-family:'Liberation Sans', sans-serif;transform:scaleX(0.9635);transform-origin:0 0;">Follow Cursor</div>
<svg class="r" style="left:481.0px;top:212.6px" width="27" height="22" viewBox="0 0 27 22"><path d="M1.9 10.9 L8.6 19.3 L23.3 1.9" stroke="#e6e7e9" stroke-width="2.1" fill="none"/></svg>
<div class="t" style="left:519.62px;top:208.87px;font-size:29px;letter-spacing:-0.410px;color:#eaebed;font-family:'Liberation Sans', sans-serif;transform:scaleX(0.9690);transform-origin:0 0;">Filter on Type</div>
<svg class="r" style="left:481.0px;top:290.2px" width="27" height="22" viewBox="0 0 27 22"><path d="M1.9 10.9 L8.6 19.3 L23.3 1.9" stroke="#e6e7e9" stroke-width="2.1" fill="none"/></svg>
<div class="t" style="left:520.20px;top:286.46px;font-size:29px;letter-spacing:-0.552px;color:#eaebed;font-family:'Liberation Sans', sans-serif;transform:scaleX(0.9560);transform-origin:0 0;">Sort By: Position</div>
<div class="t" style="left:520.21px;top:340.96px;font-size:29px;letter-spacing:-0.667px;color:#eaebed;font-family:'Liberation Sans', sans-serif;transform:scaleX(0.9551);transform-origin:0 0;">Sort By: Name</div>
<div class="t" style="left:520.21px;top:395.46px;font-size:29px;letter-spacing:-0.616px;color:#eaebed;font-family:'Liberation Sans', sans-serif;transform:scaleX(0.9543);transform-origin:0 0;">Sort By: Category</div>
<svg class="r" style="left:479px;top:126px" width="30" height="40" viewBox="0 0 30 40">
<path d="M2.5 2.5 V29 L8.8 23.2 L13.2 33.2 L17.6 31.3 L13.3 21.6 L21.8 21.6 Z" fill="#ffffff" stroke="#000000" stroke-width="1.2" stroke-linejoin="round"/>
</svg>
</body></html>
